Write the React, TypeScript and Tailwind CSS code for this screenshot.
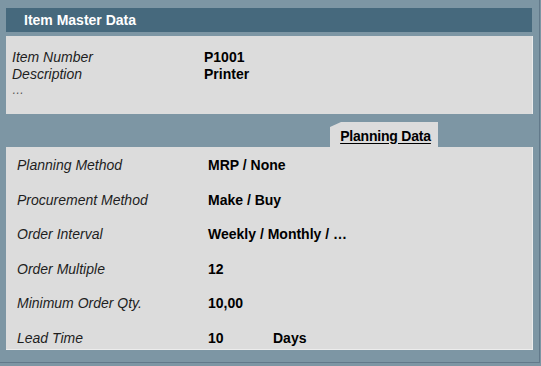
const itemRows = [
  { label: "Item Number", value: "P1001" },
  { label: "Description", value: "Printer" },
];

const planningRows = [
  { label: "Planning Method", value: "MRP / None" },
  { label: "Procurement Method", value: "Make / Buy" },
  { label: "Order Interval", value: "Weekly / Monthly / …" },
  { label: "Order Multiple", value: "12" },
  { label: "Minimum Order Qty.", value: "10,00" },
  { label: "Lead Time", value: "10", unit: "Days" },
];

const App = () => {
  return (
    <div className="w-[541px] h-[366px] bg-[#7d96a4] font-['Liberation_Sans',Arial,sans-serif] text-[14px] leading-none">
      <div className="w-[540px] h-[363px] border-r border-b border-[#62798a] pt-2 pl-[6px]">
        {/* header */}
        <div className="w-[526px] h-[24px] bg-[#46697d] flex items-center pl-[18px]">
          <span className="text-white font-bold">Item Master Data</span>
        </div>

        {/* item panel */}
        <div className="mt-[4px] w-[527px] h-[78px] bg-[#dcdcdc] border-r border-[#ececec] pt-[13px] pl-[6px]">
          {itemRows.map((row) => (
            <div key={row.label} className="flex h-[16.5px] items-center">
              <span className="w-[192px] shrink-0 italic text-[#1e1e1e]">{row.label}</span>
              <span className="font-bold text-black whitespace-nowrap">{row.value}</span>
            </div>
          ))}
          <div className="h-[16px] flex items-center text-[#555] text-[12px] italic">…</div>
        </div>

        {/* tab */}
        <div className="mt-[8px] pl-[324px]">
          <div className="w-[108px] h-[25px] bg-[#dcdcdc] flex items-center justify-center pl-[3px] [clip-path:polygon(11px_0,100%_0,100%_100%,0_100%,0_5px)]">
            <span className="font-bold underline underline-offset-[2px] text-[14px] tracking-[-0.2px] text-black pt-[2px]">
              Planning Data
            </span>
          </div>
        </div>

        {/* planning panel */}
        <div className="w-[527px] h-[203px] bg-[#dcdcdc] border-r border-b border-[#ececec] pl-[11px] pt-[1px]">
          {planningRows.map((row) => (
            <div key={row.label} className="flex h-[34.5px] items-center">
              <span className="w-[191px] shrink-0 italic text-[#1e1e1e]">{row.label}</span>
              <span className="w-[65px] shrink-0 font-bold text-black whitespace-nowrap">{row.value}</span>
              {row.unit && <span className="font-bold text-black">{row.unit}</span>}
            </div>
          ))}
        </div>
      </div>
    </div>
  );
};

export default App;
